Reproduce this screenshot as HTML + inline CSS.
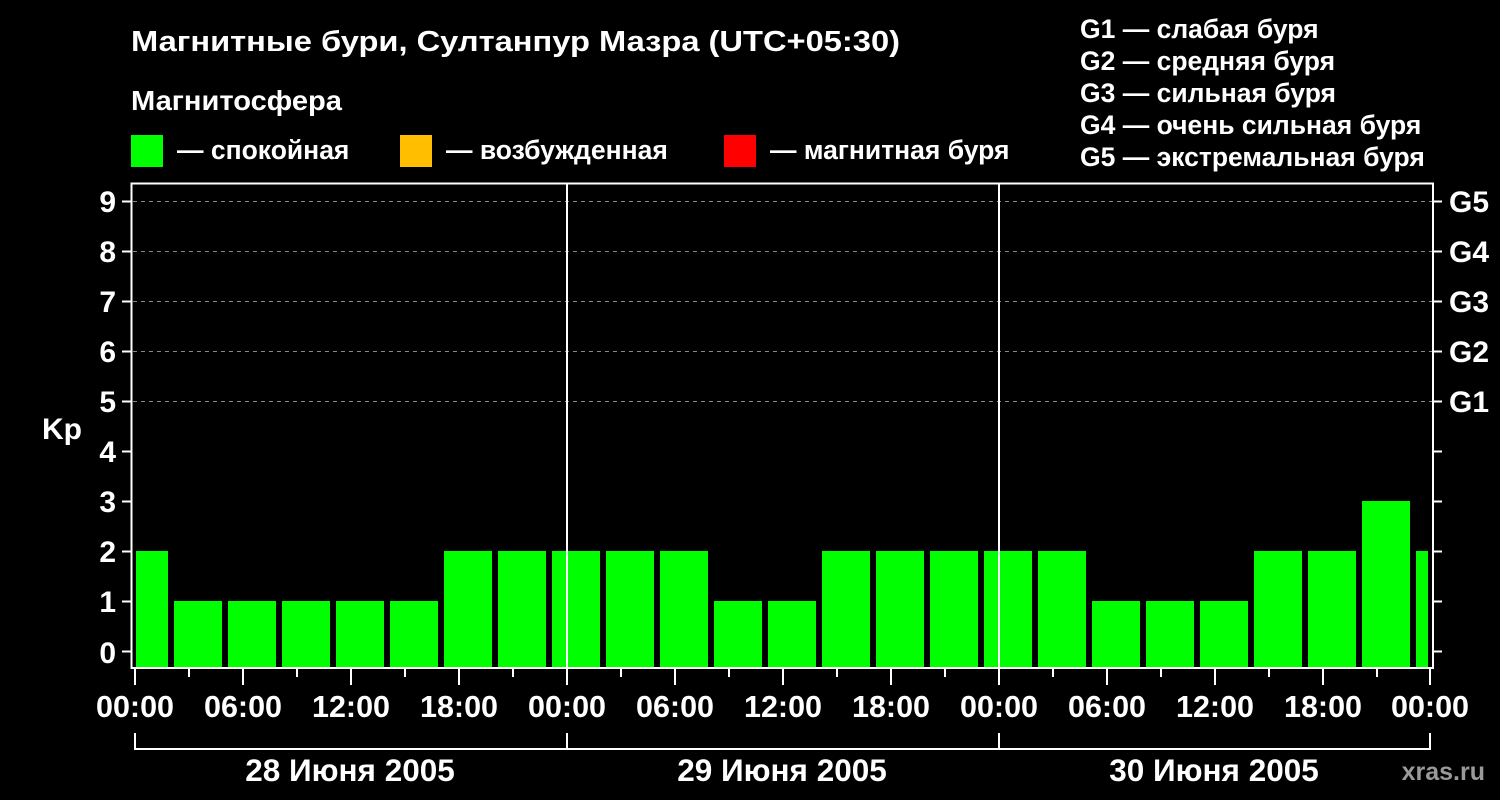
<!DOCTYPE html>
<html><head><meta charset="utf-8"><style>
html,body{margin:0;padding:0;background:#000;}
svg{display:block;}
text{font-family:"Liberation Sans",sans-serif;font-weight:bold;fill:#fff;}
</style></head><body>
<svg width="1500" height="800" viewBox="0 0 1500 800" xmlns="http://www.w3.org/2000/svg">
<rect width="1500" height="800" fill="#000"/>
<text x="131" y="51" font-size="29" textLength="769" lengthAdjust="spacingAndGlyphs">Магнитные бури, Султанпур Мазра (UTC+05:30)</text>
<text x="131" y="110" font-size="28" textLength="211" lengthAdjust="spacingAndGlyphs">Магнитосфера</text>
<rect x="131" y="135" width="32" height="32" fill="#00ff00"/>
<text x="177" y="159" font-size="26.5">— спокойная</text>
<rect x="400" y="135" width="32" height="32" fill="#ffbf00"/>
<text x="446" y="159" font-size="26.5">— возбужденная</text>
<rect x="724" y="135" width="32" height="32" fill="#ff0000"/>
<text x="770" y="159" font-size="26.5">— магнитная буря</text>
<g font-size="26.5">
<text x="1080" y="38">G1 — слабая буря</text>
<text x="1080" y="70">G2 — средняя буря</text>
<text x="1080" y="102">G3 — сильная буря</text>
<text x="1080" y="134">G4 — очень сильная буря</text>
<text x="1080" y="166">G5 — экстремальная буря</text>
</g>
<g stroke="#888" stroke-width="1" stroke-dasharray="4,4">
<line x1="133" y1="201.5" x2="1432" y2="201.5"/>
<line x1="133" y1="251.5" x2="1432" y2="251.5"/>
<line x1="133" y1="301.5" x2="1432" y2="301.5"/>
<line x1="133" y1="351.5" x2="1432" y2="351.5"/>
<line x1="133" y1="401.5" x2="1432" y2="401.5"/>
</g>
<g fill="#00ff00">
<rect x="136" y="551" width="32" height="116"/>
<rect x="174" y="601" width="48" height="66"/>
<rect x="228" y="601" width="48" height="66"/>
<rect x="282" y="601" width="48" height="66"/>
<rect x="336" y="601" width="48" height="66"/>
<rect x="390" y="601" width="48" height="66"/>
<rect x="444" y="551" width="48" height="116"/>
<rect x="498" y="551" width="48" height="116"/>
<rect x="552" y="551" width="48" height="116"/>
<rect x="606" y="551" width="48" height="116"/>
<rect x="660" y="551" width="48" height="116"/>
<rect x="714" y="601" width="48" height="66"/>
<rect x="768" y="601" width="48" height="66"/>
<rect x="822" y="551" width="48" height="116"/>
<rect x="876" y="551" width="48" height="116"/>
<rect x="930" y="551" width="48" height="116"/>
<rect x="984" y="551" width="48" height="116"/>
<rect x="1038" y="551" width="48" height="116"/>
<rect x="1092" y="601" width="48" height="66"/>
<rect x="1146" y="601" width="48" height="66"/>
<rect x="1200" y="601" width="48" height="66"/>
<rect x="1254" y="551" width="48" height="116"/>
<rect x="1308" y="551" width="48" height="116"/>
<rect x="1362" y="501" width="48" height="166"/>
<rect x="1416" y="551" width="12" height="116"/>
</g>
<g stroke="#fff" stroke-width="2" fill="none">
<path d="M131.5 668 V183.5 H1433 V668 Z"/>
<line x1="567" y1="183" x2="567" y2="668"/>
<line x1="999" y1="183" x2="999" y2="668"/>
</g>
<g stroke="#fff" stroke-width="2">
<line x1="122" y1="201.5" x2="131" y2="201.5"/><line x1="1433" y1="201.5" x2="1442" y2="201.5"/>
<line x1="122" y1="251.5" x2="131" y2="251.5"/><line x1="1433" y1="251.5" x2="1442" y2="251.5"/>
<line x1="122" y1="301.5" x2="131" y2="301.5"/><line x1="1433" y1="301.5" x2="1442" y2="301.5"/>
<line x1="122" y1="351.5" x2="131" y2="351.5"/><line x1="1433" y1="351.5" x2="1442" y2="351.5"/>
<line x1="122" y1="401.5" x2="131" y2="401.5"/><line x1="1433" y1="401.5" x2="1442" y2="401.5"/>
<line x1="122" y1="451.5" x2="131" y2="451.5"/><line x1="1433" y1="451.5" x2="1442" y2="451.5"/>
<line x1="122" y1="501.5" x2="131" y2="501.5"/><line x1="1433" y1="501.5" x2="1442" y2="501.5"/>
<line x1="122" y1="551.5" x2="131" y2="551.5"/><line x1="1433" y1="551.5" x2="1442" y2="551.5"/>
<line x1="122" y1="601.5" x2="131" y2="601.5"/><line x1="1433" y1="601.5" x2="1442" y2="601.5"/>
<line x1="122" y1="651.5" x2="131" y2="651.5"/><line x1="1433" y1="651.5" x2="1442" y2="651.5"/>
</g>
<g font-size="30" text-anchor="end">
<text x="116" y="212">9</text><text x="116" y="262">8</text><text x="116" y="312">7</text>
<text x="116" y="362">6</text><text x="116" y="412">5</text><text x="116" y="462">4</text>
<text x="116" y="512">3</text><text x="116" y="562">2</text><text x="116" y="612">1</text>
<text x="116" y="663">0</text>
</g>
<text x="42" y="439" font-size="30">Kp</text>
<g font-size="30">
<text x="1449" y="212">G5</text><text x="1449" y="262">G4</text><text x="1449" y="312">G3</text>
<text x="1449" y="362">G2</text><text x="1449" y="412">G1</text>
</g>
<g stroke="#fff" stroke-width="2">
<line x1="135" y1="668" x2="135" y2="685"/><line x1="189" y1="668" x2="189" y2="677"/>
<line x1="243" y1="668" x2="243" y2="685"/><line x1="297" y1="668" x2="297" y2="677"/>
<line x1="351" y1="668" x2="351" y2="685"/><line x1="405" y1="668" x2="405" y2="677"/>
<line x1="459" y1="668" x2="459" y2="685"/><line x1="513" y1="668" x2="513" y2="677"/>
<line x1="567" y1="668" x2="567" y2="685"/><line x1="621" y1="668" x2="621" y2="677"/>
<line x1="675" y1="668" x2="675" y2="685"/><line x1="729" y1="668" x2="729" y2="677"/>
<line x1="783" y1="668" x2="783" y2="685"/><line x1="837" y1="668" x2="837" y2="677"/>
<line x1="891" y1="668" x2="891" y2="685"/><line x1="945" y1="668" x2="945" y2="677"/>
<line x1="999" y1="668" x2="999" y2="685"/><line x1="1053" y1="668" x2="1053" y2="677"/>
<line x1="1107" y1="668" x2="1107" y2="685"/><line x1="1161" y1="668" x2="1161" y2="677"/>
<line x1="1215" y1="668" x2="1215" y2="685"/><line x1="1269" y1="668" x2="1269" y2="677"/>
<line x1="1323" y1="668" x2="1323" y2="685"/><line x1="1377" y1="668" x2="1377" y2="677"/>
<line x1="1430" y1="668" x2="1430" y2="685"/>
<path d="M135 733 V749 H1430 V733 M567 733 V749 M999 733 V749" fill="none"/>
</g>
<g font-size="30.5" text-anchor="middle">
<text x="135" y="717">00:00</text><text x="243" y="717">06:00</text><text x="351" y="717">12:00</text>
<text x="459" y="717">18:00</text><text x="567" y="717">00:00</text><text x="675" y="717">06:00</text>
<text x="783" y="717">12:00</text><text x="891" y="717">18:00</text><text x="999" y="717">00:00</text>
<text x="1107" y="717">06:00</text><text x="1215" y="717">12:00</text><text x="1323" y="717">18:00</text>
<text x="1430" y="717">00:00</text>
</g>
<g font-size="31.5" text-anchor="middle">
<text x="350" y="781">28 Июня 2005</text>
<text x="782" y="781">29 Июня 2005</text>
<text x="1214" y="781">30 Июня 2005</text>
</g>
<text x="1485" y="780" font-size="25" text-anchor="end" style="fill:#9a9a9a">xras.ru</text>
</svg>
</body></html>
